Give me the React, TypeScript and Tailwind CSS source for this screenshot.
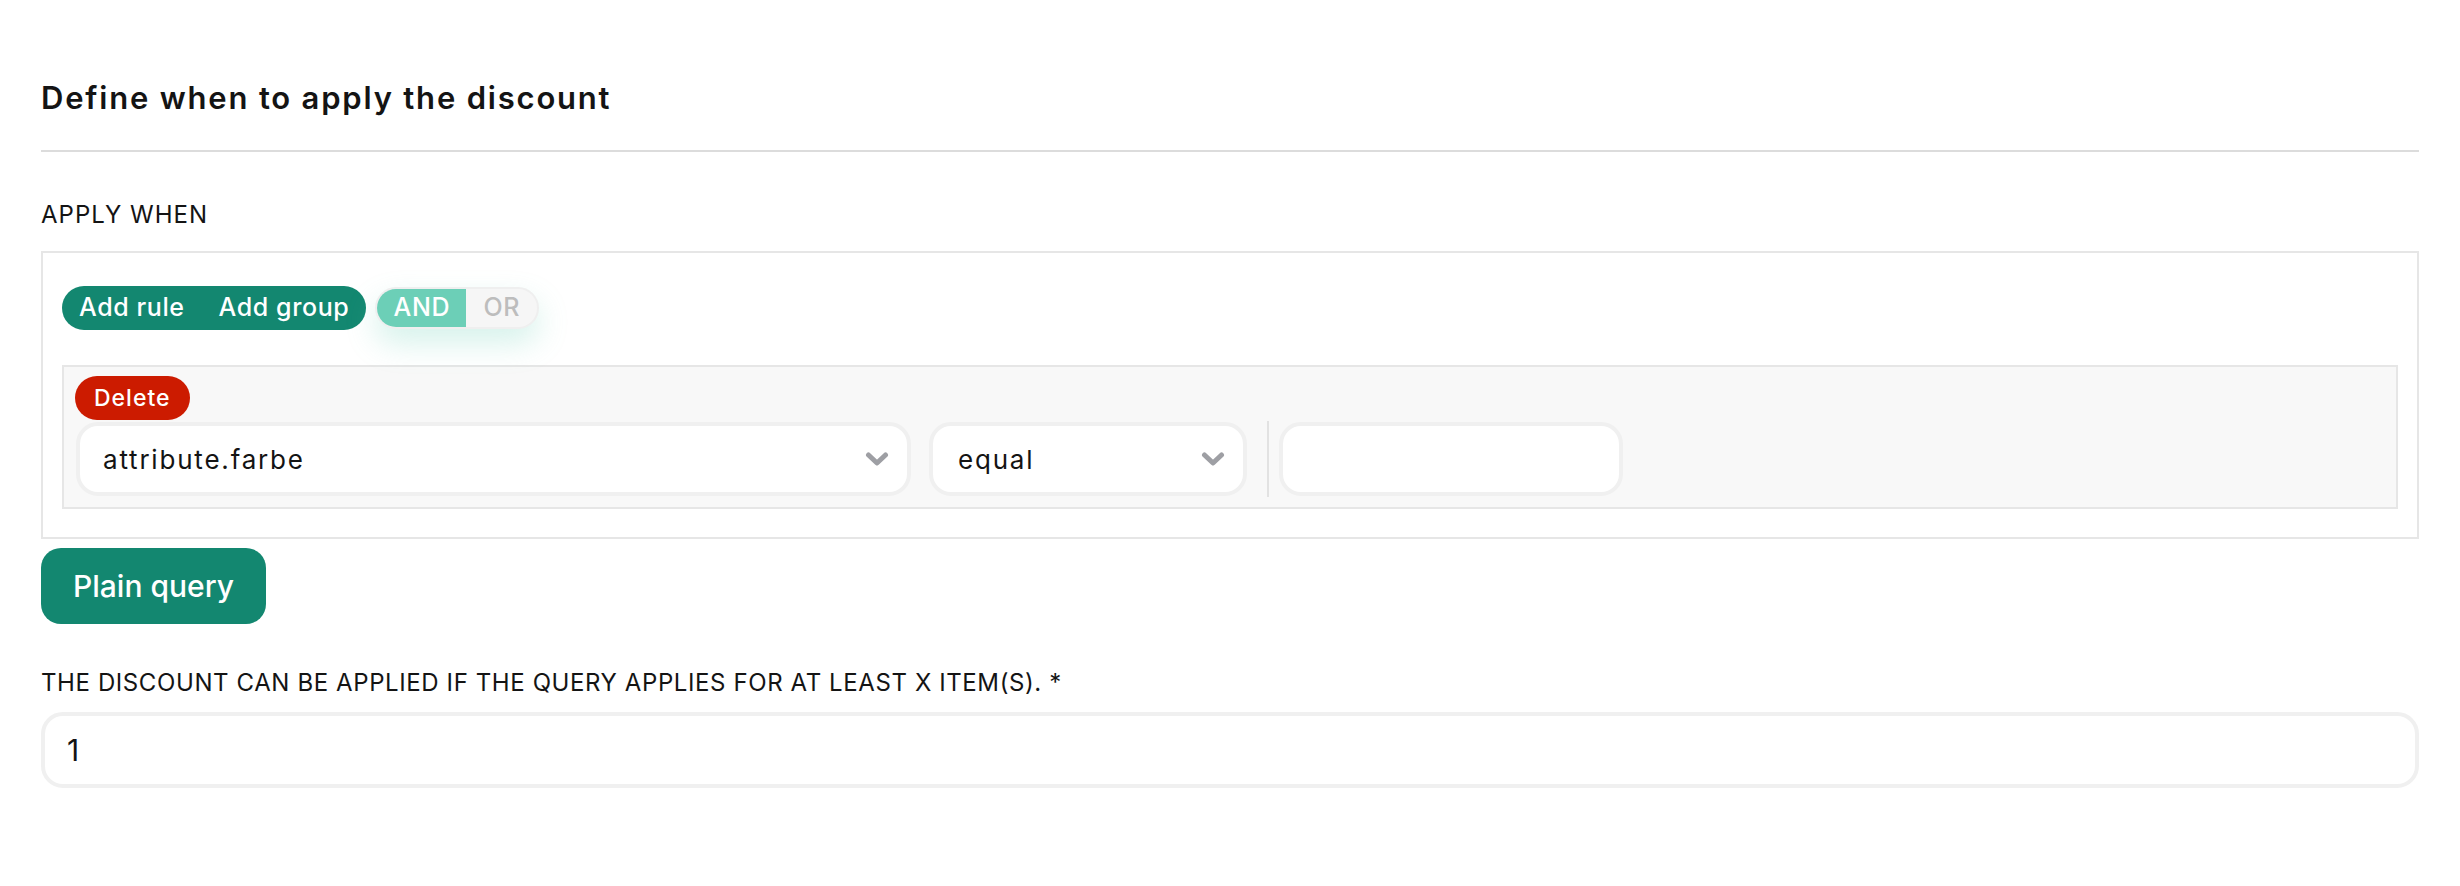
import React from "react";

function Chevron() {
  return (
    <svg
      aria-hidden="true"
      className="h-[16px] w-[24px] shrink-0"
      fill="none"
      viewBox="0 0 24 16"
    >
      <path
        d="M3.5 4 L12 12 L20.5 4"
        stroke="#9e9fa4"
        strokeLinecap="round"
        strokeLinejoin="round"
        strokeWidth="5"
      />
    </svg>
  );
}

function SelectBox({
  value,
  width,
  textPad
}: {
  value: string;
  width: string;
  textPad: string;
}) {
  return (
    <div
      className={`flex h-[74px] items-center justify-between rounded-[22px] border-4 border-[#f0f0f0] bg-white pr-[18px] ${width} ${textPad}`}
    >
      <span className="text-[26px] tracking-[1.8px] text-[#141414]">
        {value}
      </span>
      <Chevron />
    </div>
  );
}

export default function App() {
  return (
    <main className="min-h-screen bg-white px-[41px] pt-[80px] font-['Inter',sans-serif] text-[#141414]">
      <h1 className="text-[31px] font-semibold leading-[36px] tracking-[1.8px]">
        Define when to apply the discount
      </h1>

      <div className="mt-[34px] h-[2px] bg-[#dcdcdc]" />

      <p className="mt-[48px] text-[24px] leading-[30px] tracking-[1px]">
        APPLY WHEN
      </p>

      <section className="mt-[21px] border-2 border-[#e6e6e6] px-[19px] pb-[28px] pt-[33px]">
        <div className="flex items-center">
          <div className="flex h-[44px] items-center rounded-full bg-[#138770] text-[25px] font-medium tracking-[0.6px] text-white">
            <button className="px-[17px]">Add rule</button>
            <button className="px-[17px]">Add group</button>
          </div>

          <div className="ml-[9px] flex h-[42px] overflow-hidden rounded-full border-2 border-[#efefef] bg-[#f6f6f6] text-[25px] font-medium tracking-[0.7px] shadow-[0_14px_30px_rgba(108,207,183,0.28)]">
            <span className="flex w-[89px] items-center justify-center bg-[#6ccfb7] text-white">
              AND
            </span>
            <span className="flex w-[71px] items-center justify-center text-[#bdbdbd]">
              OR
            </span>
          </div>
        </div>

        <div className="mt-[35px] border-2 border-[#e6e6e6] bg-[#f8f8f8] pb-[10px] pl-[11px] pt-[9px]">
          <button className="flex h-[44px] items-center rounded-full bg-[#cc1b00] px-[19px] text-[23px] font-medium tracking-[1px] text-white">
            Delete
          </button>

          <div className="mt-[1px] flex items-center pl-[1px]">
            <SelectBox
              textPad="pl-[23px]"
              value="attribute.farbe"
              width="w-[835px]"
            />
            <div className="ml-[18px]">
              <SelectBox textPad="pl-[25px]" value="equal" width="w-[318px]" />
            </div>
            <div className="ml-[20px] h-[76px] w-[2px] bg-[#e2e2e2]" />
            <div className="ml-[10px] h-[74px] w-[344px] rounded-[22px] border-4 border-[#f0f0f0] bg-white" />
          </div>
        </div>
      </section>

      <button className="mt-[9px] flex h-[76px] items-center rounded-[20px] bg-[#138770] px-[32px] text-[30px] font-medium text-white">
        Plain query
      </button>

      <p className="mt-[44px] text-[24px] leading-[30px] tracking-[0.6px]">
        THE DISCOUNT CAN BE APPLIED IF THE QUERY APPLIES FOR AT LEAST X ITEM(S). *
      </p>

      <div className="mt-[14px] flex h-[76px] items-center rounded-[22px] border-4 border-[#f0f0f0] bg-white pl-[22px]">
        <span className="text-[30px]">1</span>
      </div>
    </main>
  );
}
